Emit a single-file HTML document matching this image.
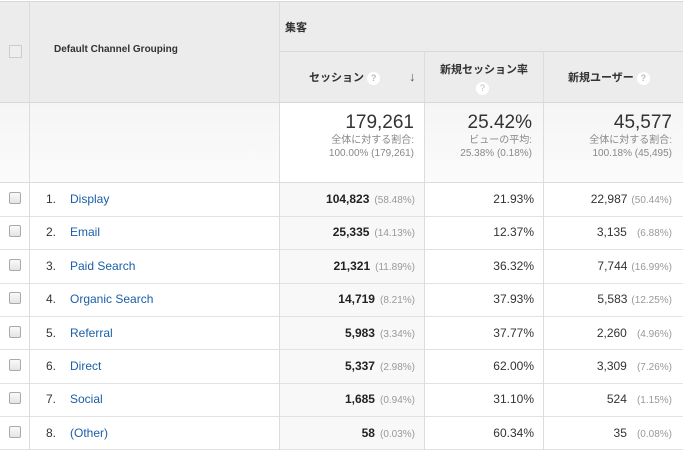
<!DOCTYPE html>
<html><head><meta charset="utf-8"><style>
*{margin:0;padding:0;box-sizing:border-box}
body{width:683px;height:452px;overflow:hidden;background:#fff;font-family:"Liberation Sans","Noto Sans CJK JP",sans-serif;color:#222;position:relative}
.a{position:absolute}
.hd{background:#ececec}
.vl{position:absolute;width:1px;background:#dcdcdc}
.hl{position:absolute;height:1px;background:#e2e2e2;left:0;width:683px}
.q{display:inline-block;width:13px;height:13px;border-radius:50%;background:#fff;color:#bbb;font-size:9px;text-align:center;line-height:13px;vertical-align:middle}
.cb{position:absolute;left:9px;width:12px;height:12px;border:1px solid #aaa;border-radius:2px;background:linear-gradient(#fafafa,#e4e4e4)}
.num{position:absolute;left:46px;font-size:12px;color:#333}
.lnk{position:absolute;left:70px;font-size:12px;color:#1a5fa8}
.s{position:absolute;right:268px;font-size:12px;color:#222;font-weight:bold;text-align:right}
.s i{font-style:normal;font-weight:normal;color:#999;font-size:10px;margin-left:5px}
.r{position:absolute;right:149px;font-size:12px;color:#333}
.u{position:absolute;right:11px;font-size:12px;color:#333}
.u i{font-style:normal;color:#999;font-size:10px;margin-left:4px}
.sm{font-size:10px;color:#888;line-height:13px;text-align:right}
.h{font-size:11px;font-weight:bold;color:#333}
</style></head><body>
<div class="a hd" style="left:0;top:2px;width:683px;height:100px"></div>
<div class="a" style="left:0;top:102px;width:683px;height:80px;background:linear-gradient(#f5f5f5,#fbfbfb)"></div>
<div class="a" style="left:279px;top:102px;width:145px;height:80px;background:#fff"></div>
<div class="a" style="left:279px;top:182px;width:145px;height:268px;background:#f8f8f8"></div>
<div class="hl" style="top:1px;background:#d8d8d8"></div>
<div class="hl" style="left:279px;width:404px;top:51px;background:#d8d8d8"></div>
<div class="hl" style="top:102px;background:#d8d8d8"></div>
<div class="hl" style="top:182px;background:#dcdcdc"></div>
<div class="hl" style="top:216px"></div><div class="hl" style="top:249px"></div>
<div class="hl" style="top:283px"></div><div class="hl" style="top:316px"></div>
<div class="hl" style="top:349px"></div><div class="hl" style="top:383px"></div>
<div class="hl" style="top:416px"></div><div class="hl" style="top:449px"></div>
<div class="vl" style="left:29px;top:2px;height:448px"></div>
<div class="vl" style="left:279px;top:2px;height:448px"></div>
<div class="vl" style="left:424px;top:51px;height:399px"></div>
<div class="vl" style="left:543px;top:51px;height:399px"></div>
<div class="a" style="left:9px;top:45px;width:13px;height:13px;border:1px solid #ccc;background:#eee"></div>
<div class="a h" style="left:54px;top:44px;font-size:10px">Default Channel Grouping</div>
<div class="a h" style="left:285px;top:19px">集客</div>
<div class="a h" style="left:309px;top:69px">セッション <span class="q">?</span></div>
<div class="a" style="left:409px;top:69px;font-size:13px;color:#555">↓</div>
<div class="a h" style="left:440px;top:61px">新規セッション率</div>
<div class="a" style="left:476px;top:80px"><span class="q">?</span></div>
<div class="a h" style="left:568px;top:69px">新規ユーザー <span class="q">?</span></div>
<div class="a" style="right:269px;top:112px;text-align:right"><div style="font-size:19px;color:#333;line-height:22px">179,261</div><div class="sm">全体に対する割合:</div><div class="sm">100.00% (179,261)</div></div>
<div class="a" style="right:151px;top:112px;text-align:right"><div style="font-size:19px;color:#333;line-height:22px">25.42%</div><div class="sm">ビューの平均:</div><div class="sm">25.38% (0.18%)</div></div>
<div class="a" style="right:11px;top:112px;text-align:right"><div style="font-size:19px;color:#333;line-height:22px">45,577</div><div class="sm">全体に対する割合:</div><div class="sm">100.18% (45,495)</div></div>

<div class="cb" style="top:192px"></div><div class="num" style="top:192px">1.</div><div class="lnk" style="top:192px">Display</div><div class="s" style="top:192px">104,823<i>(58.48%)</i></div><div class="r" style="top:192px">21.93%</div><div class="u" style="top:192px">22,987<i>(50.44%)</i></div>
<div class="cb" style="top:225px"></div><div class="num" style="top:225px">2.</div><div class="lnk" style="top:225px">Email</div><div class="s" style="top:225px">25,335<i>(14.13%)</i></div><div class="r" style="top:225px">12.37%</div><div class="u" style="top:225px">3,135 <i>&nbsp;(6.88%)</i></div>
<div class="cb" style="top:259px"></div><div class="num" style="top:259px">3.</div><div class="lnk" style="top:259px">Paid Search</div><div class="s" style="top:259px">21,321<i>(11.89%)</i></div><div class="r" style="top:259px">36.32%</div><div class="u" style="top:259px">7,744<i>(16.99%)</i></div>
<div class="cb" style="top:292px"></div><div class="num" style="top:292px">4.</div><div class="lnk" style="top:292px">Organic Search</div><div class="s" style="top:292px">14,719<i>(8.21%)</i></div><div class="r" style="top:292px">37.93%</div><div class="u" style="top:292px">5,583<i>(12.25%)</i></div>
<div class="cb" style="top:326px"></div><div class="num" style="top:326px">5.</div><div class="lnk" style="top:326px">Referral</div><div class="s" style="top:326px">5,983<i>(3.34%)</i></div><div class="r" style="top:326px">37.77%</div><div class="u" style="top:326px">2,260 <i>&nbsp;(4.96%)</i></div>
<div class="cb" style="top:359px"></div><div class="num" style="top:359px">6.</div><div class="lnk" style="top:359px">Direct</div><div class="s" style="top:359px">5,337<i>(2.98%)</i></div><div class="r" style="top:359px">62.00%</div><div class="u" style="top:359px">3,309 <i>&nbsp;(7.26%)</i></div>
<div class="cb" style="top:392px"></div><div class="num" style="top:392px">7.</div><div class="lnk" style="top:392px">Social</div><div class="s" style="top:392px">1,685<i>(0.94%)</i></div><div class="r" style="top:392px">31.10%</div><div class="u" style="top:392px">524 <i>&nbsp;(1.15%)</i></div>
<div class="cb" style="top:426px"></div><div class="num" style="top:426px">8.</div><div class="lnk" style="top:426px">(Other)</div><div class="s" style="top:426px">58<i>(0.03%)</i></div><div class="r" style="top:426px">60.34%</div><div class="u" style="top:426px">35 <i>&nbsp;(0.08%)</i></div>
</body></html>
